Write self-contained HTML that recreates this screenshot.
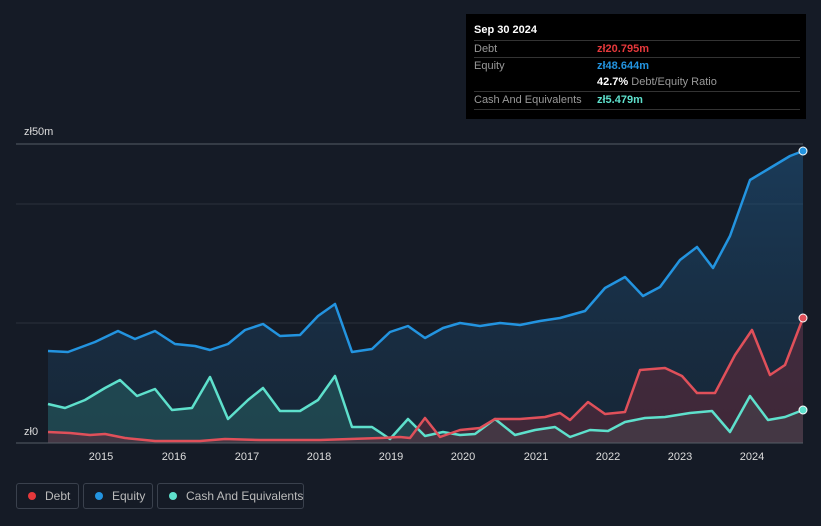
<!DOCTYPE html>
<html><head><meta charset="utf-8"><style>
body{margin:0;background:#151b26;font-family:"Liberation Sans",sans-serif;width:821px;height:526px;overflow:hidden;position:relative}
.tip{position:absolute;left:466px;top:14px;width:340px;height:105px;background:#000;font-size:11px;color:#999}
.row{position:absolute;left:8px;width:326px;border-top:1px solid #333;height:17px;line-height:17px}
.leg{position:absolute;top:483px;height:26px;border:1px solid #3a414d;border-radius:3px;color:#bbb;font-size:12px;line-height:24px;box-sizing:border-box;white-space:nowrap}
.leg i{position:absolute;left:11px;top:8px;width:8px;height:8px;border-radius:50%}
.leg span{position:absolute;left:28px;white-space:nowrap}
</style></head><body>
<svg width="821" height="526" style="position:absolute;left:0;top:0">
<defs>
<linearGradient id="ge" x1="0" y1="0" x2="0" y2="1"><stop offset="0" stop-color="#1f5a8a" stop-opacity=".5"/><stop offset="1" stop-color="#1a3a55" stop-opacity=".35"/></linearGradient>
</defs>
<g stroke="#2a313c" stroke-width="1">
<line x1="16" y1="144" x2="803" y2="144" stroke="#555c66"/><line x1="16" y1="204" x2="803" y2="204"/><line x1="16" y1="323" x2="803" y2="323"/>
</g>
<path fill="url(#ge)" d="M48,351 L68,352 95,342 118,331 135,339 155,331 175,344 195,346 210,350 228,344 245,330 263,324 280,336 300,335 318,316 335,304 352,352 372,349 390,332 408,326 425,338 443,328 460,323 480,326 500,323 520,325 540,321 560,318 585,311 605,288 625,277 643,296 660,287 680,260 697,247 713,268 730,236 750,180 770,168 790,156 803,151 L803,443 L48,443Z"/>
<path fill="#2a6a6a" fill-opacity=".45" d="M48,404 L65,408 85,400 105,388 120,380 137,396 155,389 172,410 192,408 210,377 228,419 248,400 263,388 280,411 300,411 318,400 335,376 352,427 372,427 390,439 408,419 425,436 443,432 460,435 475,434 495,419 515,435 535,430 555,427 570,437 590,430 608,431 625,422 645,418 665,417 690,413 712,411 730,432 750,396 768,420 785,417 803,410 L803,443 L48,443Z"/>
<path fill="#6a2a3a" fill-opacity=".5" d="M48,432 L70,433 90,435 105,434 125,438 155,441 200,441 225,439 260,440 320,440 350,439 380,438 400,437 410,438 425,418 440,437 460,430 480,428 495,419 520,419 545,417 560,413 570,420 588,402 605,414 625,412 640,370 665,368 682,376 697,393 715,393 735,355 752,330 770,375 785,365 803,318 L803,443 L48,443Z"/>
<g fill="none" stroke-width="2.5" stroke-linejoin="round">
<path stroke="#2394e0" d="M48,351 L68,352 95,342 118,331 135,339 155,331 175,344 195,346 210,350 228,344 245,330 263,324 280,336 300,335 318,316 335,304 352,352 372,349 390,332 408,326 425,338 443,328 460,323 480,326 500,323 520,325 540,321 560,318 585,311 605,288 625,277 643,296 660,287 680,260 697,247 713,268 730,236 750,180 770,168 790,156 803,151"/>
<path stroke="#5ee0cc" d="M48,404 L65,408 85,400 105,388 120,380 137,396 155,389 172,410 192,408 210,377 228,419 248,400 263,388 280,411 300,411 318,400 335,376 352,427 372,427 390,439 408,419 425,436 443,432 460,435 475,434 495,419 515,435 535,430 555,427 570,437 590,430 608,431 625,422 645,418 665,417 690,413 712,411 730,432 750,396 768,420 785,417 803,410"/>
<path stroke="#e0505a" d="M48,432 L70,433 90,435 105,434 125,438 155,441 200,441 225,439 260,440 320,440 350,439 380,438 400,437 410,438 425,418 440,437 460,430 480,428 495,419 520,419 545,417 560,413 570,420 588,402 605,414 625,412 640,370 665,368 682,376 697,393 715,393 735,355 752,330 770,375 785,365 803,318"/>
</g>
<line x1="16" y1="443" x2="803" y2="443" stroke="#555c66"/>
<circle cx="803" cy="151" r="4" fill="#2394e0" stroke="#fff" stroke-width="1"/>
<circle cx="803" cy="318" r="4" fill="#e0505a" stroke="#fff" stroke-width="1"/>
<circle cx="803" cy="410" r="4" fill="#5ee0cc" stroke="#fff" stroke-width="1"/>
<rect x="16" y="422" width="32" height="20" fill="#151b26"/>
<g fill="#ddd" font-size="11" font-family="Liberation Sans" text-anchor="middle">
<text x="101" y="460">2015</text><text x="174" y="460">2016</text><text x="247" y="460">2017</text><text x="319" y="460">2018</text><text x="391" y="460">2019</text><text x="463" y="460">2020</text><text x="536" y="460">2021</text><text x="608" y="460">2022</text><text x="680" y="460">2023</text><text x="752" y="460">2024</text>
</g>
<text x="24" y="135" fill="#ddd" font-size="11" font-family="Liberation Sans">zł50m</text>
<text x="24" y="435" fill="#ddd" font-size="11" font-family="Liberation Sans">zł0</text>
</svg>
<div class="tip">
<div style="position:absolute;left:8px;top:10px;color:#fff;font-weight:bold">Sep 30 2024</div>
<div class="row" style="top:26px">Debt<span style="position:absolute;left:123px;color:#e5383b;font-weight:bold">zł20.795m</span></div>
<div class="row" style="top:43px;border-bottom:none">Equity<span style="position:absolute;left:123px;color:#2394e0;font-weight:bold">zł48.644m</span></div>
<div style="position:absolute;left:131px;top:60px;line-height:17px"><b style="color:#fff">42.7%</b> Debt/Equity Ratio</div>
<div class="row" style="top:77px;border-bottom:1px solid #333">Cash And Equivalents<span style="position:absolute;left:123px;color:#5ee0cc;font-weight:bold">zł5.479m</span></div>
</div>
<div class="leg" style="left:16px;width:63px"><i style="background:#e5383b"></i><span>Debt</span></div>
<div class="leg" style="left:83px;width:70px"><i style="background:#2394e0"></i><span>Equity</span></div>
<div class="leg" style="left:157px;width:147px"><i style="background:#5ee0cc"></i><span>Cash And Equivalents</span></div>
</body></html>
